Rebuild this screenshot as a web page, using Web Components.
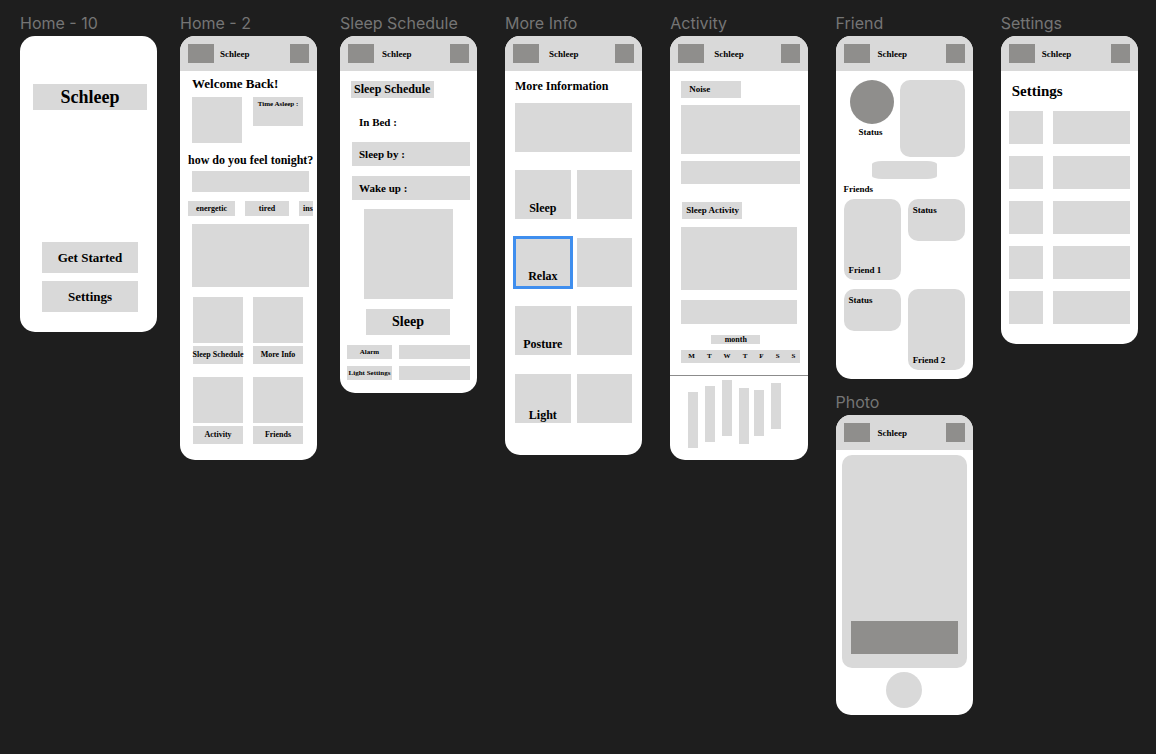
<!DOCTYPE html>
<html lang="en">
<head>
<meta charset="utf-8">
<meta name="viewport" content="width=device-width, initial-scale=1">
<title>Schleep wireframes</title>
<style>
  body { margin: 0; background: #1e1e1e; min-height: 100vh; }
</style>
</head>
<body>
<design-canvas>
  <art-board slot="home" label="Home - 10"><screen-start></screen-start></art-board>
  <art-board slot="home" label="Home - 2"><screen-home></screen-home></art-board>
  <art-board slot="home" label="Sleep Schedule"><screen-schedule></screen-schedule></art-board>
  <art-board slot="more" label="More Info"><screen-info></screen-info></art-board>
  <art-board slot="more" label="Activity"><screen-activity></screen-activity></art-board>
  <board-stack slot="more">
    <art-board label="Friend"><screen-friend></screen-friend></art-board>
    <art-board label="Photo"><screen-photo></screen-photo></art-board>
  </board-stack>
  <art-board slot="more" label="Settings"><screen-settings></screen-settings></art-board>
</design-canvas>

<script>
const base = `
  * { box-sizing: border-box; margin: 0; }
  :host { display: block; --fill: #d9d9d9; --dark: #8f8e8c; }
  .fill { background: var(--fill); }
  h2, h3, p, button, a, span { font-family: "Liberation Serif", serif; font-weight: 700; color: #000; }
  button, a { display: flex; align-items: center; justify-content: center; border: 0; padding: 0;
    background: var(--fill); text-decoration: none; white-space: nowrap; cursor: pointer; }
`;

function define(name, css, html) {
  const template = document.createElement('template');
  template.innerHTML = `<style>${base}${css}</style>${html}`;
  customElements.define(name, class extends HTMLElement {
    constructor() {
      super();
      this.attachShadow({ mode: 'open' }).append(template.content.cloneNode(true));
    }
    connectedCallback() {
      const label = this.shadowRoot.querySelector('[data-label]');
      if (label) label.textContent = this.getAttribute('label');
    }
  });
}

define('design-canvas', `
  :host { display: grid; grid-template-columns: 457fr 633fr; column-gap: 28px; padding: 0 18px 24px 20px; }
  .group { display: grid; align-items: start; }
  .home { grid-template-columns: repeat(3, minmax(0, 1fr)); column-gap: 23px; }
  .more { grid-template-columns: repeat(4, minmax(0, 1fr)); column-gap: 28px; }
`, `
  <div class="group home"><slot name="home"></slot></div>
  <div class="group more"><slot name="more"></slot></div>
`);

define('board-stack', '', '<slot></slot>');

define('art-board', `
  .name { padding: 13px 0 3px; font: 400 16px/20px Inter, sans-serif; color: #757575; white-space: nowrap; }
  .frame { background: #fff; border-radius: 15px; overflow: hidden; }
`, `
  <h2 class="name" data-label></h2>
  <div class="frame"><slot></slot></div>
`);

define('app-bar', `
  :host { display: flex; align-items: center; gap: var(--title-gap, 8px); height: 35px; padding: 0 8px; background: var(--fill); }
  .menu { width: 26px; height: 19px; background: var(--dark); }
  .profile { width: 19px; height: 19px; margin-left: auto; background: var(--dark); }
  p { font-size: 9px; line-height: 12px; }
`, `
  <button class="menu" aria-label="Menu"></button>
  <p>Schleep</p>
  <button class="profile" aria-label="Profile"></button>
`);

define('screen-start', `
  :host { padding: 48px 10px 20px 13px; }
  h3 { font-size: 18px; line-height: 26px; text-align: center; }
  .actions { display: grid; gap: 8px; margin: 132px 9px 0; }
  button { height: 31px; font-size: 13px; }
`, `
  <h3 class="fill">Schleep</h3>
  <div class="actions"><button>Get Started</button><button>Settings</button></div>
`);

define('screen-home', `
  app-bar { --title-gap: 6px; }
  .body { padding: 5px 8px 16px 12px; }
  h3 { font-size: 13px; line-height: 16px; }
  .summary { display: grid; grid-template-columns: 50fr 50fr; align-items: start; gap: 11px; margin: 5px 6px 9px 0; }
  .photo { height: 46px; }
  .asleep { height: 29px; padding-top: 3px; font-size: 7px; line-height: 8px; text-align: center; }
  .ask { margin: 0 -8px 3px -4px; font-size: 12px; white-space: nowrap; }
  .answer { height: 21px; }
  .chips { display: flex; gap: 10px; margin: 9px -4px 8px; overflow: hidden; }
  .chips button { flex: 0 0 auto; height: 15px; width: 47px; font-size: 8px; }
  .chips button.short { width: 44px; }
  .chips button.cut { justify-content: start; padding-left: 4px; }
  .banner { height: 63px; }
  nav { display: grid; grid-template-columns: repeat(2, minmax(0, 1fr)); gap: 13px 10px; margin: 10px 6px 0 1px; }
  a { flex-direction: column; gap: 3px; background: none; font-size: 8px; }
  a i { width: 100%; height: 46px; background: var(--fill); }
  a b { display: flex; justify-content: center; width: 100%; background: var(--fill); line-height: 18px; }
`, `
  <app-bar></app-bar>
  <div class="body">
    <h3>Welcome Back!</h3>
    <div class="summary"><div class="photo fill"></div><p class="asleep fill">Time Asleep :</p></div>
    <h3 class="ask">how do you feel tonight?</h3>
    <div class="answer fill"></div>
    <div class="chips"><button>energetic</button><button class="short">tired</button><button class="cut">ins</button></div>
    <div class="banner fill"></div>
    <nav>
      <a href="#schedule"><i></i><b>Sleep Schedule</b></a>
      <a href="#info"><i></i><b>More Info</b></a>
      <a href="#activity"><i></i><b>Activity</b></a>
      <a href="#friends"><i></i><b>Friends</b></a>
    </nav>
  </div>
`);

define('screen-schedule', `
  .body { padding: 10px 7px 13px 12px; }
  h3 { width: 83px; margin: 0 0 12px -1px; padding-left: 3px; font-size: 12px; line-height: 17px; white-space: nowrap; }
  .row { padding-left: 7px; font-size: 11px; line-height: 24px; }
  .row + .row { margin-top: 8px; }
  .row.fill + .row { margin-top: 10px; }
  .clock { height: 90px; margin: 9px 17px 10px 12px; }
  button { width: 84px; height: 26px; margin-left: 14px; font-size: 14px; }
  .options { display: grid; grid-template-columns: 45fr 71fr; gap: 7px; margin: 10px 0 0 -5px; }
  .options p { font-size: 7px; line-height: 14px; text-align: center; white-space: nowrap; }
`, `
  <app-bar></app-bar>
  <div class="body">
    <h3 class="fill">Sleep Schedule</h3>
    <p class="row">In Bed :</p>
    <p class="row fill">Sleep by :</p>
    <p class="row fill">Wake up :</p>
    <div class="clock fill"></div>
    <button>Sleep</button>
    <div class="options">
      <p class="fill">Alarm</p><div class="fill"></div>
      <p class="fill">Light Settings</p><div class="fill"></div>
    </div>
  </div>
`);

define('screen-info', `
  app-bar { --title-gap: 10px; }
  .body { padding: 7px 10px 32px; }
  h3 { font-size: 12px; line-height: 16px; }
  .hero { height: 49px; margin: 9px 0 18px; }
  .topics { display: grid; grid-template-columns: 1fr 1fr; gap: 19px 6px; }
  .topics > * { height: 49px; }
  a { align-items: end; padding-bottom: 3px; font-size: 12px; line-height: 16px; }
  a.low { padding-bottom: 0; }
  a[aria-current] { outline: 3px solid #3f8eee; outline-offset: -1px; }
`, `
  <app-bar></app-bar>
  <div class="body">
    <h3>More Information</h3>
    <div class="hero fill"></div>
    <div class="topics">
      <a href="#sleep">Sleep</a><div class="fill"></div>
      <a href="#relax" aria-current="true">Relax</a><div class="fill"></div>
      <a href="#posture">Posture</a><div class="fill"></div>
      <a href="#light" class="low">Light</a><div class="fill"></div>
    </div>
  </div>
`);

define('screen-activity', `
  app-bar { --title-gap: 10px; }
  .body { padding: 10px 8px 12px 11px; }
  h3 { width: 60px; padding-left: 8px; font-size: 9px; line-height: 17px; white-space: nowrap; }
  .noise { height: 49px; margin: 7px 0; }
  .level { height: 23px; margin-bottom: 18px; }
  .activity { padding-left: 4px; margin-left: 1px; }
  .graph { height: 63px; margin: 8px 3px 10px 0; }
  .note { height: 24px; margin-right: 3px; }
  .month { width: 49px; margin: 11px 0 6px 30px; font-size: 8px; line-height: 9px; text-align: center; }
  .days { display: flex; justify-content: space-between; line-height: 13px; padding: 0 4px 0 7px; }
  .days span { font-size: 7px; }
  .bars { display: flex; align-items: start; gap: 7px; height: 85px; padding: 4px 18px; border-top: 1px solid #8c8c8c; }
  .bars i { width: 10px; height: 56px; background: var(--fill); }
  .bars .s { height: 46px; }
  .bars :nth-child(1) { margin-top: 12px; }
  .bars :nth-child(2) { margin-top: 6px; }
  .bars :nth-child(4) { margin-top: 8px; }
  .bars :nth-child(5) { margin: 10px 0 0 -2px; }
  .bars :nth-child(6) { margin-top: 3px; }
`, `
  <app-bar></app-bar>
  <div class="body">
    <h3 class="fill">Noise</h3>
    <div class="noise fill"></div>
    <div class="level fill"></div>
    <h3 class="activity fill">Sleep Activity</h3>
    <div class="graph fill"></div>
    <div class="note fill"></div>
    <p class="month fill">month</p>
    <div class="days fill"><span>M</span><span>T</span><span>W</span><span>T</span><span>F</span><span>S</span><span>S</span></div>
  </div>
  <div class="bars"><i></i><i></i><i></i><i></i><i class="s"></i><i class="s"></i></div>
`);

define('screen-friend', `
  .body { padding: 9px 8px; }
  .top { display: grid; grid-template-columns: 1fr 65px; }
  .me { padding-left: 6px; }
  .avatar { width: 44px; height: 44px; border-radius: 50%; background: var(--dark); }
  p, h3 { font-size: 9px; line-height: 12px; }
  .me p { width: 42px; margin-top: 2px; text-align: center; }
  .mood { height: 77px; border-radius: 10px; }
  .pill { width: 65px; height: 18px; margin: 4px 0 4px 28px; border-radius: 10px / 3px; }
  .friends { display: grid; grid-template-columns: 1fr 1fr; align-items: start; gap: 9px 7px; margin-top: 4px; }
  .card { height: 42px; padding: 5px; border-radius: 10px; }
  .tall { display: flex; align-items: end; height: 81px; padding-bottom: 4px; }
`, `
  <app-bar></app-bar>
  <div class="body">
    <div class="top">
      <div class="me"><div class="avatar"></div><p>Status</p></div>
      <div class="mood fill"></div>
    </div>
    <div class="pill fill"></div>
    <h3>Friends</h3>
    <div class="friends">
      <div class="card tall fill"><p>Friend 1</p></div><div class="card fill"><p>Status</p></div>
      <div class="card fill"><p>Status</p></div><div class="card tall fill"><p>Friend 2</p></div>
    </div>
  </div>
`);

define('screen-photo', `
  .body { padding: 5px 6px 7px; }
  .view { display: flex; align-items: end; height: 213px; padding: 0 9px 14px; border-radius: 10px; }
  .caption { flex: 1; height: 33px; background: var(--dark); }
  button { width: 36px; height: 36px; margin: 4px auto 0; border-radius: 50%; }
`, `
  <app-bar></app-bar>
  <div class="body">
    <div class="view fill"><div class="caption"></div></div>
    <button aria-label="Take photo"></button>
  </div>
`);

define('screen-settings', `
  app-bar { --title-gap: 7px; }
  .body { padding: 11px 8px 20px; }
  h3 { padding-left: 3px; font-size: 15px; line-height: 18px; }
  .list { display: grid; grid-template-columns: 34fr 77fr; grid-auto-rows: 33px; gap: 12px 10px; margin-top: 11px; }
`, `
  <app-bar></app-bar>
  <div class="body">
    <h3>Settings</h3>
    <div class="list">${'<div class="fill"></div><div class="fill"></div>'.repeat(5)}</div>
  </div>
`);
</script>
</body>
</html>
